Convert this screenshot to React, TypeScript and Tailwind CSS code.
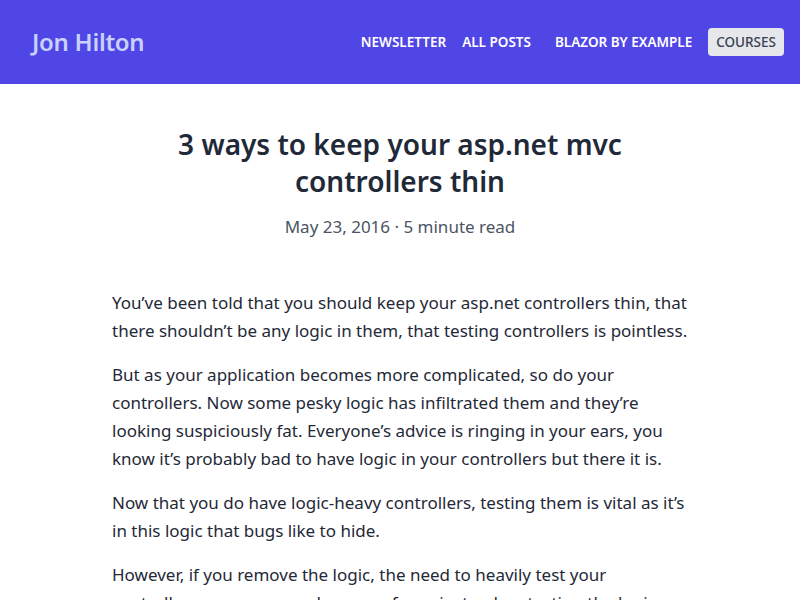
const font = { fontFamily: '"Noto Sans", "Open Sans", sans-serif' }

const navItems = ['NEWSLETTER', 'ALL POSTS', 'BLAZOR BY EXAMPLE']

function Header() {
  return (
    <header className="h-[84px] bg-[#4f46e5] flex items-center justify-between pl-8 pr-4">
      <a className="text-[24px] font-semibold text-[#c7d2fe] tracking-[-0.3px]">Jon Hilton</a>
      <nav className="flex items-center text-[13.5px] font-semibold text-white">
        <a className="mr-4">{navItems[0]}</a>
        <a className="mr-6">{navItems[1]}</a>
        <a className="mr-4">{navItems[2]}</a>
        <a className="bg-[#e5e7eb] text-[#374151] font-medium rounded px-2 py-[4px]">COURSES</a>
      </nav>
    </header>
  )
}

export default function App() {
  return (
    <div style={font} className="min-h-screen bg-white">
      <Header />
      <article className="max-w-xl mx-auto pt-[42px]">
        <h1 className="text-[28px] leading-[37px] font-semibold text-[#1f2937] text-center">
          3 ways to keep your asp.net mvc controllers thin
        </h1>
        <p className="mt-[13px] text-center text-[17px] leading-7 text-[#4b5563]">
          May 23, 2016 · 5 minute read
        </p>
        <div className="mt-12 text-[17px] leading-7 text-[#1f2937]">
          <p className="mb-4">
            You’ve been told that you should keep your asp.net controllers thin, that there shouldn’t be any logic in them, that testing controllers is pointless.
          </p>
          <p className="mb-4">
            But as your application becomes more complicated, so do your controllers. Now some pesky logic has infiltrated them and they’re looking suspiciously fat. Everyone’s advice is ringing in your ears, you know it’s probably bad to have logic in your controllers but there it is.
          </p>
          <p className="mb-4">
            Now that you do have logic-heavy controllers, testing them is vital as it’s in this logic that bugs like to hide.
          </p>
          <p className="mb-4">
            However, if you remove the logic, the need to heavily test your controllers goes away and you can focus instead on testing the logic itself.
          </p>
        </div>
      </article>
    </div>
  )
}
